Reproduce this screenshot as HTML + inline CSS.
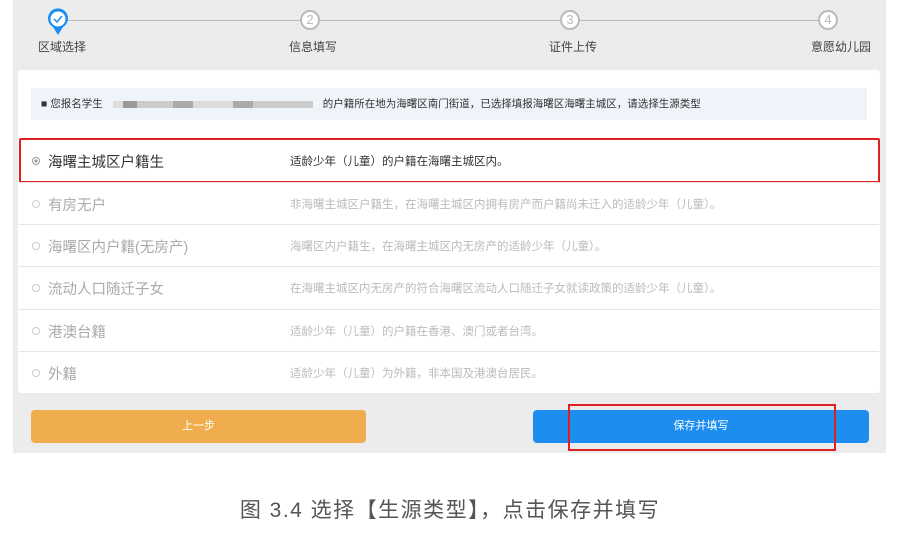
<!DOCTYPE html>
<html><head><meta charset="utf-8"><style>
body{margin:0;width:900px;height:539px;background:#fff;font-family:"Liberation Sans","Noto Sans CJK SC",sans-serif;position:relative;overflow:hidden}
.a{position:absolute}
.panel{left:13px;top:0;width:873px;height:453px;background:#ececec}
.line{top:20px;height:1px;background:#bbb;left:58px;width:770px}
.step{width:20px;height:20px;border-radius:50%;top:10px;box-sizing:border-box;border:2px solid #bbb;background:#fff;color:#bbb;font-size:13px;text-align:center;line-height:16px}
.lab{top:38px;font-size:12px;color:#444;white-space:nowrap}
.card{left:18px;top:70px;width:862px;height:323px;background:#fff;border-radius:3px}
.info{left:31px;top:88px;width:836px;height:32px;background:#eef4fa;font-size:10.5px;color:#333;line-height:32px;white-space:nowrap}
.row{left:19px;width:860px;height:42px;border-top:1px solid #e5e5e5;font-size:14.5px;color:#aaa}
.row .r{position:absolute;left:13px;top:17px;width:8px;height:8px;border-radius:50%;border:1px solid #ccc;box-sizing:border-box}
.row .t{position:absolute;left:29px;top:11px}
.row .d{position:absolute;left:271px;top:13px;font-size:11.5px;color:#bbb;white-space:nowrap}
.btn{top:410px;height:33px;border-radius:4px;color:#fff;font-size:11px;text-align:center;line-height:33px}
</style></head><body>
<div class="a panel"></div>
<div class="a line"></div>
<svg class="a" style="left:47px;top:8px" width="22" height="28" viewBox="0 0 22 28"><path d="M11 27 L6 19 A10 10 0 1 1 16 19 Z" fill="#1e8df0"/><circle cx="11" cy="11" r="7.5" fill="#fff"/><path d="M7 11 L10 14 L15 8" stroke="#1e8df0" stroke-width="1.5" fill="none"/></svg>
<div class="a step" style="left:300px">2</div>
<div class="a step" style="left:560px">3</div>
<div class="a step" style="left:818px">4</div>
<div class="a lab" style="left:38px">区域选择</div>
<div class="a lab" style="left:289px">信息填写</div>
<div class="a lab" style="left:549px">证件上传</div>
<div class="a lab" style="left:811px">意愿幼儿园</div>
<div class="a card"></div>
<div class="a info"><span style="margin-left:10px">■ 您报名学生</span><span style="display:inline-block;vertical-align:middle;width:200px;height:7px;margin:0 10px;background:linear-gradient(90deg,#ddd 0 5%,#999 5% 12%,#ccc 12% 30%,#aaa 30% 40%,#ddd 40% 60%,#aaa 60% 70%,#ccc 70% 100%)"></span>的户籍所在地为海曙区南门街道，已选择填报海曙区海曙主城区，请选择生源类型</div>
<div class="a row" style="top:140px;border:none;color:#333"><div class="r" style="border-color:#999;background:radial-gradient(#999 35%,#fff 40%)"></div><div class="t">海曙主城区户籍生</div><div class="d" style="color:#333">适龄少年（儿童）的户籍在海曙主城区内。</div></div>
<div class="a" style="left:19px;top:138px;width:857px;height:41px;border:2px solid #e02020;border-radius:2px"></div>
<div class="a row" style="top:182px"><div class="r"></div><div class="t">有房无户</div><div class="d">非海曙主城区户籍生，在海曙主城区内拥有房产而户籍尚未迁入的适龄少年（儿童）。</div></div>
<div class="a row" style="top:224px"><div class="r"></div><div class="t">海曙区内户籍(无房产)</div><div class="d">海曙区内户籍生，在海曙主城区内无房产的适龄少年（儿童）。</div></div>
<div class="a row" style="top:266px"><div class="r"></div><div class="t">流动人口随迁子女</div><div class="d">在海曙主城区内无房产的符合海曙区流动人口随迁子女就读政策的适龄少年（儿童）。</div></div>
<div class="a row" style="top:309px"><div class="r"></div><div class="t">港澳台籍</div><div class="d">适龄少年（儿童）的户籍在香港、澳门或者台湾。</div></div>
<div class="a row" style="top:351px"><div class="r"></div><div class="t">外籍</div><div class="d">适龄少年（儿童）为外籍，非本国及港澳台居民。</div></div>
<div class="a btn" style="left:31px;width:335px;background:#f0ad4e">上一步</div>
<div class="a btn" style="left:533px;width:336px;background:#1e8df0">保存并填写</div>
<div class="a" style="left:568px;top:404px;width:264px;height:43px;border:2px solid #e02020"></div>
<div class="a" style="left:0;width:900px;top:494px;text-align:center;font-size:21px;letter-spacing:1.5px;color:#555">图 3.4 选择【生源类型】，点击保存并填写</div>
</body></html>
